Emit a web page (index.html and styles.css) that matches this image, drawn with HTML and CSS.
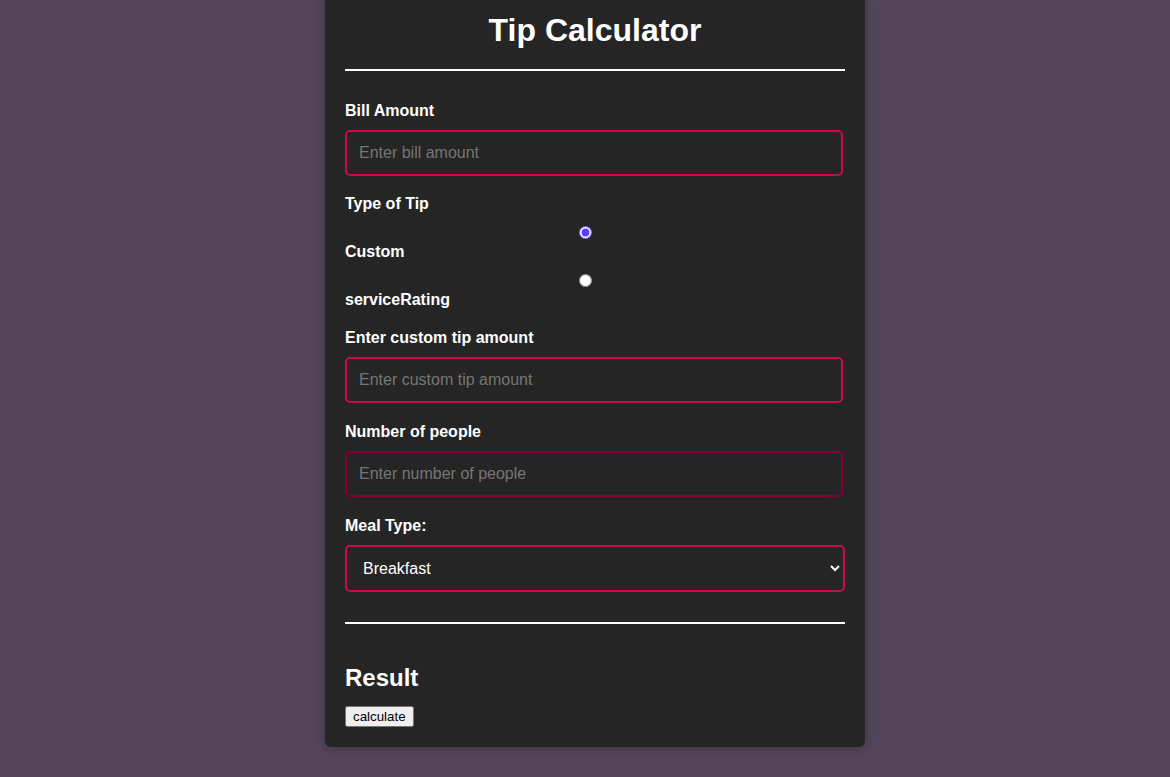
FILE: index.html
```html
<!DOCTYPE html>
<html lang="en">
<head>
<meta charset="utf-8">
<title>Tip Calculator</title>
<link rel="stylesheet" href="styles.css">
</head>
<body>
<div class="card">
  <h1 class="title">Tip Calculator</h1>
  <hr class="rule rule-top">
  <form class="form">
    <div class="group group-bill">
      <label class="label" for="bill">Bill Amount</label>
      <input class="field" id="bill" type="text" placeholder="Enter bill amount">
    </div>
    <div class="group">
      <label class="label">Type of Tip</label>
      <input class="radio" type="radio" name="tip" id="custom" checked>
      <label class="label" for="custom">Custom</label>
      <input class="radio" type="radio" name="tip" id="rating">
      <label class="label" for="rating">serviceRating</label>
    </div>
    <div class="group">
      <label class="label" for="tipamt">Enter custom tip amount</label>
      <input class="field" id="tipamt" type="text" placeholder="Enter custom tip amount">
    </div>
    <div class="group">
      <label class="label" for="people">Number of people</label>
      <input class="field" id="people" type="text" placeholder="Enter number of people" autofocus>
    </div>
    <div class="group">
      <label class="label" for="meal">Meal Type:</label>
      <select class="select" id="meal">
        <option>Breakfast</option>
        <option>Lunch</option>
        <option>Dinner</option>
      </select>
    </div>
  </form>
  <hr class="rule rule-bottom">
  <h2 class="result-title">Result</h2>
  <button class="calc-btn" type="button">calculate</button>
</div>
</body>
</html>
```

FILE: styles.css
```css
html, body {
  margin: 0;
  padding: 0;
}

body {
  background: #524459;
  font-family: "Liberation Sans", Arial, sans-serif;
  color: #ffffff;
  display: flex;
  justify-content: center;
  align-items: flex-start;
  min-height: 777px;
  padding-left: 20px;
  box-sizing: border-box;
}

.card {
  width: 500px;
  background: #252525;
  padding: 12px 20px 20px;
  border-radius: 0 0 6px 6px;
  box-shadow: 0 0 10px rgba(0, 0, 0, 0.25);
}

.title {
  margin: 0;
  font-size: 32px;
  font-weight: bold;
  text-align: center;
  color: #ffffff;
}

.rule {
  border: none;
  height: 2px;
  background: #ffffff;
  margin: 0;
}

.rule-top {
  margin-top: 20px;
}

.rule-bottom {
  margin-top: 30px;
  margin-bottom: 40px;
}

.form {
  margin: 31px 0 0;
}

.group {
  margin-bottom: 20px;
}

.group-bill {
  margin-bottom: 19px;
}

.label {
  display: block;
  font-size: 16px;
  font-weight: bold;
  color: #ffffff;
  margin-bottom: 10px;
}

.field {
  display: block;
  box-sizing: border-box;
  width: calc(100% - 2px);
  padding: 12px;
  border: 2px solid #cc0a4a;
  border-radius: 5px;
  background: #252525;
  color: #ffffff;
  font-family: "Liberation Sans", Arial, sans-serif;
  font-size: 16px;
  outline: none;
  margin: 0;
}

.field::placeholder {
  color: #757575;
}

.field:focus {
  border-color: #820038;
}

.radio {
  display: block;
  width: 13px;
  height: 13px;
  margin: 13px 0 4px 233.5px;
  accent-color: #5a3dff;
}

.select {
  display: block;
  box-sizing: border-box;
  width: 100%;
  padding: 12px;
  border: 2px solid #cc0a4a;
  border-radius: 5px;
  background: #252525;
  color: #ffffff;
  font-family: "Liberation Sans", Arial, sans-serif;
  font-size: 16px;
  outline: none;
  margin: 0;
}

.result-title {
  margin: 0 0 14px;
  font-size: 24px;
  font-weight: bold;
  color: #ffffff;
}

.calc-btn {
  display: block;
  margin: 0;
}
```
